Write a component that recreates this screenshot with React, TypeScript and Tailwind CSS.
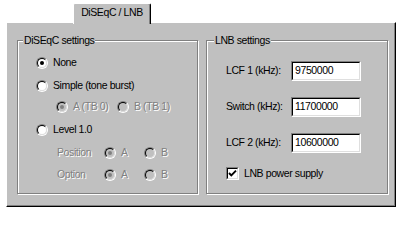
import React from "react";

// ── Win95-style property page: DiSEqC / LNB ──

const face = "bg-[#c0c0c0]";

function Radio({ checked, disabled }: { checked?: boolean; disabled?: boolean }) {
  return (
    <span className="inline-flex size-[12px] shrink-0 rounded-full border border-t-[#808080] border-l-[#808080] border-r-white border-b-white">
      <span
        className={`flex size-full items-center justify-center rounded-full border border-t-black border-l-black border-r-[#dfdfdf] border-b-[#dfdfdf] ${
          disabled ? "bg-[#c0c0c0]" : "bg-white"
        }`}
      >
        {checked && (
          <span className={`size-[4px] rounded-full ${disabled ? "bg-[#808080]" : "bg-black"}`} />
        )}
      </span>
    </span>
  );
}

function Checkbox({ checked }: { checked?: boolean }) {
  return (
    <span className="inline-flex size-[13px] shrink-0 border border-t-[#808080] border-l-[#808080] border-r-white border-b-white">
      <span className="flex size-full items-center justify-center border border-t-black border-l-black border-r-[#dfdfdf] border-b-[#dfdfdf] bg-white">
        {checked && (
          <svg width="9" height="9" viewBox="0 0 9 9">
            <polyline points="1,4 3.3,6.4 8,1.6" fill="none" stroke="#000" strokeWidth="1.9" />
          </svg>
        )}
      </span>
    </span>
  );
}

function Option({ label, checked, disabled }: { label: string; checked?: boolean; disabled?: boolean }) {
  return (
    <div className="flex h-[14px] items-center gap-[5px]">
      <Radio checked={checked} disabled={disabled} />
      <span className={disabled ? "text-[#808080] [text-shadow:1px_1px_0_#fff]" : "text-black"}>{label}</span>
    </div>
  );
}

function Group({
  title,
  titleLeft,
  className,
  children,
}: {
  title: string;
  titleLeft: string;
  className: string;
  children: React.ReactNode;
}) {
  return (
    <div
      className={`relative h-[154px] border border-[#808080] shadow-[inset_1px_1px_0_#fff,1px_1px_0_#fff] ${className}`}
    >
      <span className={`absolute top-[-7px] ${titleLeft} ${face} px-[1px] leading-[13px] text-black`}>{title}</span>
      {children}
    </div>
  );
}

function Field({ label, value, className }: { label: string; value: string; className: string }) {
  return (
    <div className={`flex items-center ${className}`}>
      <span className="w-[65px] text-black">{label}</span>
      <div className="flex h-[20px] w-[70px] items-center border border-t-[#808080] border-l-[#808080] border-r-white border-b-white">
        <div className="flex size-full items-center border border-t-black border-l-black border-r-[#dfdfdf] border-b-[#dfdfdf] bg-white pl-[2px] text-black">
          {value}
        </div>
      </div>
    </div>
  );
}

export default function App() {
  const disabledText = "text-[#808080] [text-shadow:1px_1px_0_#fff]";

  return (
    <div className="h-[211px] w-[400px] overflow-hidden bg-white font-['Liberation_Sans',Arial,sans-serif] text-[10.5px] tracking-[-0.4px]">
      {/* Tab strip */}
      <div className="relative z-10 flex pl-[73px] pt-[3px]">
        <div
          className={`flex h-[21px] w-[78px] items-center justify-center rounded-t-[2px] border-l border-t border-r border-l-white border-t-white border-r-black ${face} pb-[3px] text-black shadow-[inset_-1px_0_0_#808080]`}
        >
          DiSEqC / LNB
        </div>
      </div>

      {/* Page */}
      <div
        className={`ml-[6px] -mt-[2px] flex h-[185px] w-[390px] gap-[8px] border border-l-white border-t-white border-r-black border-b-black ${face} pl-[10px] pt-[17px] shadow-[inset_-1px_-1px_0_#808080]`}
      >
        <Group title="DiSEqC settings" titleLeft="left-[5px]" className="w-[181px]">
          <div className="flex flex-col pl-[18px] pt-[15px]">
            <Option label="None" checked />
            <div className="mt-[9px]">
              <Option label="Simple (tone burst)" />
            </div>
            <div className="mt-[7px] flex pl-[20px]">
              <div className="w-[61px]">
                <Option label="A (TB 0)" checked disabled />
              </div>
              <Option label="B (TB 1)" disabled />
            </div>
            <div className="mt-[9px]">
              <Option label="Level 1.0" />
            </div>
            <div className="mt-[8px] flex items-center pl-[21px]">
              <span className={`w-[47px] ${disabledText}`}>Position</span>
              <div className="w-[40px]">
                <Option label="A" checked disabled />
              </div>
              <Option label="B" disabled />
            </div>
            <div className="mt-[6px] flex items-center pl-[21px]">
              <span className={`w-[47px] ${disabledText}`}>Option</span>
              <div className="w-[40px]">
                <Option label="A" checked disabled />
              </div>
              <Option label="B" disabled />
            </div>
          </div>
        </Group>

        <Group title="LNB settings" titleLeft="left-[7px]" className="w-[182px]">
          <div className="flex flex-col pl-[19px] pt-[20px]">
            <Field label="LCF 1 (kHz):" value="9750000" className="" />
            <Field label="Switch (kHz):" value="11700000" className="mt-[16px]" />
            <Field label="LCF 2 (kHz):" value="10600000" className="mt-[16px]" />
            <div className="mt-[13px] flex items-center gap-[5px]">
              <Checkbox checked />
              <span className="text-black">LNB power supply</span>
            </div>
          </div>
        </Group>
      </div>
    </div>
  );
}
